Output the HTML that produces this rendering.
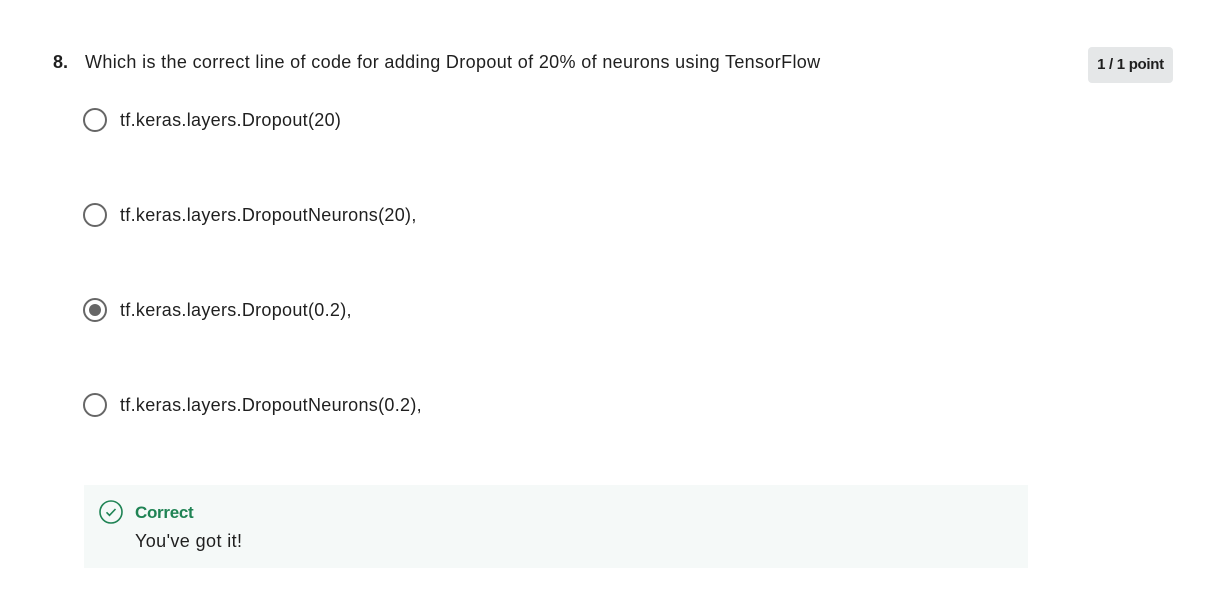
<!DOCTYPE html>
<html><head><style>
body{margin:0;width:1210px;height:606px;background:#fff;font-family:"Liberation Sans",sans-serif;color:#1f1f1f;position:relative;overflow:hidden}
.a{position:absolute;white-space:nowrap}
.q{left:85px;top:52px;font-size:18px;letter-spacing:0.35px}
.n{left:53px;top:52px;font-size:18px;font-weight:bold}
.badge{left:1088px;top:47px;width:85px;height:36px;background:#e5e7e8;border-radius:4px;font-size:15px;font-weight:bold;text-align:center;line-height:36px;letter-spacing:-0.3px}
.r{position:absolute;left:83px;width:20px;height:20px;border:2px solid #666;border-radius:50%}
.o{left:120px;font-size:18px;letter-spacing:0.3px}
.box{left:84px;top:485px;width:944px;height:83px;background:#f5f9f8}
</style></head><body>
<div class="a n">8.</div>
<div class="a q">Which is the correct line of code for adding Dropout of 20% of neurons using TensorFlow</div>
<div class="a badge">1 / 1 point</div>
<div class="r" style="top:108px"></div><div class="a o" style="top:110px">tf.keras.layers.Dropout(20)</div>
<div class="r" style="top:203px"></div><div class="a o" style="top:205px">tf.keras.layers.DropoutNeurons(20),</div>
<div class="r" style="top:298px"><div style="position:absolute;left:4px;top:4px;width:12px;height:12px;border-radius:50%;background:#666"></div></div><div class="a o" style="top:300px">tf.keras.layers.Dropout(0.2),</div>
<div class="r" style="top:393px"></div><div class="a o" style="top:395px">tf.keras.layers.DropoutNeurons(0.2),</div>
<div class="a box"></div>
<svg class="a" style="left:99px;top:500px" width="24" height="24" viewBox="0 0 24 24"><circle cx="12" cy="12" r="11" fill="none" stroke="#1f8354" stroke-width="1.6"/><path d="M7.5 12.3l3 3 6-6.3" fill="none" stroke="#1f8354" stroke-width="1.6"/></svg>
<div class="a" style="left:135px;top:503px;font-size:17px;font-weight:bold;color:#1f8354;letter-spacing:-0.3px">Correct</div>
<div class="a" style="left:135px;top:531px;font-size:18px;letter-spacing:0.4px">You've got it!</div>
</body></html>
